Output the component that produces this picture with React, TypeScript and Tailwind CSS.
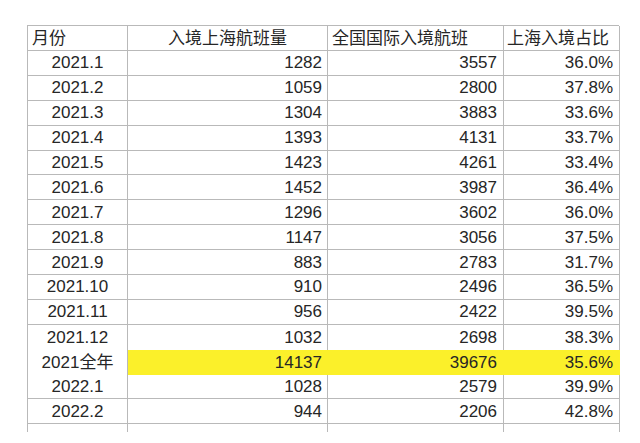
import React from 'react';

type Row = { month: string; sh: string; all: string; pct: string; total?: boolean; noBottom?: boolean };

const rows: Row[] = [
  { month: '2021.1', sh: '1282', all: '3557', pct: '36.0%' },
  { month: '2021.2', sh: '1059', all: '2800', pct: '37.8%' },
  { month: '2021.3', sh: '1304', all: '3883', pct: '33.6%' },
  { month: '2021.4', sh: '1393', all: '4131', pct: '33.7%' },
  { month: '2021.5', sh: '1423', all: '4261', pct: '33.4%' },
  { month: '2021.6', sh: '1452', all: '3987', pct: '36.4%' },
  { month: '2021.7', sh: '1296', all: '3602', pct: '36.0%' },
  { month: '2021.8', sh: '1147', all: '3056', pct: '37.5%' },
  { month: '2021.9', sh: '883', all: '2783', pct: '31.7%' },
  { month: '2021.10', sh: '910', all: '2496', pct: '36.5%' },
  { month: '2021.11', sh: '956', all: '2422', pct: '39.5%' },
  { month: '2021.12', sh: '1032', all: '2698', pct: '38.3%', noBottom: true },
  { month: '2021全年', sh: '14137', all: '39676', pct: '35.6%', total: true, noBottom: true },
  { month: '2022.1', sh: '1028', all: '2579', pct: '39.9%' },
  { month: '2022.2', sh: '944', all: '2206', pct: '42.8%' },
];

const grid = 'grid grid-cols-[100px_200px_176px_116px]';

export default function App() {
  return (
    <div
      className="w-[640px] h-[443px] bg-white overflow-hidden pt-[25px] pl-[27px] text-[17px] leading-none text-[#262626]"
      style={{ fontFamily: '"Liberation Sans", "Noto Sans CJK SC", sans-serif' }}
    >
      <div className="w-[592px] border-l border-t border-[#b9b9b9]">
        {/* Header */}
        <div className={`${grid} h-[25px]`}>
          <div className="flex items-center px-[4px] border-r border-b border-[#b9b9b9]">月份</div>
          <div className="flex items-center justify-center border-r border-b border-[#b9b9b9]">入境上海航班量</div>
          <div className="flex items-center px-[4px] border-r border-b border-[#b9b9b9]">全国国际入境航班</div>
          <div className="flex items-center px-[3px] border-r border-b border-[#b9b9b9]">上海入境占比</div>
        </div>

        {rows.map((r) => {
          const b = r.noBottom ? 'border-b-0' : 'border-b';
          const y = r.total ? 'bg-[#fbf02a] border-r-[#fbf02a]' : 'border-r-[#b9b9b9]';
          return (
            <div key={r.month} className={`${grid} h-[24.9px]`}>
              <div className={`flex items-center justify-center border-r border-[#b9b9b9] ${b}`}>{r.month}</div>
              <div className={`flex items-center justify-end pr-[5px] border-r border-b-[#b9b9b9] ${b} ${y}`}>{r.sh}</div>
              <div className={`flex items-center justify-end pr-[6px] border-r border-b-[#b9b9b9] ${b} ${y}`}>{r.all}</div>
              <div className={`flex items-center justify-end pr-[6px] border-r border-b-[#b9b9b9] ${b} ${y}`}>{r.pct}</div>
            </div>
          );
        })}

        {/* cut-off next row */}
        <div className={`${grid} h-[8px]`}>
          <div className="border-r border-[#b9b9b9]" />
          <div className="border-r border-[#b9b9b9]" />
          <div className="border-r border-[#b9b9b9]" />
          <div className="border-r border-[#b9b9b9]" />
        </div>
      </div>
    </div>
  );
}
